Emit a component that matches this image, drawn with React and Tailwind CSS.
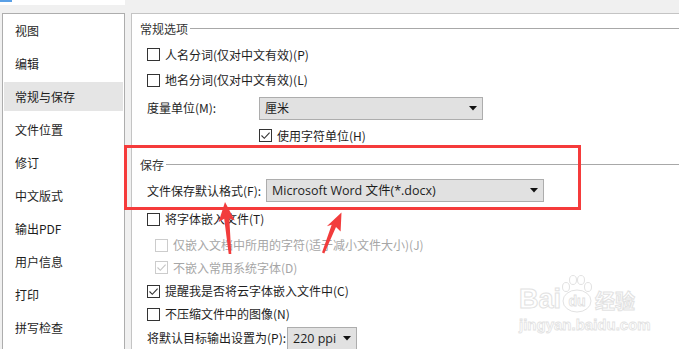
import React from "react";

function Box({ checked, disabled }) {
  return (
    <span
      className={`w-[13px] h-[13px] border ${disabled ? "border-[#cccccc]" : "border-[#333333]"} bg-white flex items-center justify-center shrink-0`}
    >
      {checked && (
        <svg width="11" height="11" viewBox="0 0 11 11">
          <path d="M1.5 5.5 L4.3 8.3 L9.6 2.6" fill="none" stroke={disabled ? "#c4c4c4" : "#333333"} strokeWidth="1.1" />
        </svg>
      )}
    </span>
  );
}

function CheckRow({ label, checked, disabled, className }) {
  return (
    <div className={`flex items-center h-[22px] ${className}`}>
      <Box checked={checked} disabled={disabled} />
      <span className={`ml-[5px] ${disabled ? "text-[#a6a6a6]" : "text-[#1e1e1e]"}`}>{label}</span>
    </div>
  );
}

function Arrow() {
  return (
    <svg width="8" height="5" viewBox="0 0 8 5" className="shrink-0">
      <polygon points="0,0 8,0 4,4.5" fill="#111" />
    </svg>
  );
}

function Select({ text, className, latin }) {
  return (
    <div className={`h-[23px] border border-[#adadad] bg-[#e1e1e1] flex items-center justify-between pl-[5px] pr-[5px] ${className}`}>
      <span className={`text-[#1e1e1e] ${latin ? "font-['Open_Sans','Noto_Sans_CJK_SC',sans-serif] text-[12.5px]" : ""}`}>{text}</span>
      <Arrow />
    </div>
  );
}

function Heading({ text, className }) {
  return (
    <div className={`flex items-center h-[22px] ${className}`}>
      <span className="text-[#333333]">{text}</span>
      <div className="flex-1 h-px bg-[#a8a8a8] ml-[2px]" />
    </div>
  );
}

const navItems = ["视图", "编辑", "常规与保存", "文件位置", "修订", "中文版式", "输出PDF", "用户信息", "打印", "拼写检查"];

export default function App() {
  return (
    <div className="w-[679px] h-[349px] overflow-hidden bg-[#f0f0f0] relative font-['Noto_Sans_CJK_SC','Microsoft_YaHei',sans-serif] text-[12px] leading-[16px]">
      <div className="h-[13px]">
        <div className="h-[5px] w-[125px] bg-white">
          <div className="h-[2px] w-[12px] bg-[#5aa0e6]" />
        </div>
      </div>
      <div className="flex h-[336px]">
        <div className="ml-[2px] w-[123px] h-full bg-white border-t border-l border-r border-[#adadad] pt-[2px] px-px flex flex-col gap-[4px]">
          {navItems.map((t, i) => (
            <div
              key={t}
              className={`h-[29px] flex items-center pl-[11px] text-[#1e1e1e] ${i === 2 ? "bg-[#e5e5e5]" : ""}`}
            >
              {t}
            </div>
          ))}
        </div>
        <div className="ml-[6px] flex-1 h-full bg-white border-t border-l border-[#c4c4c4] pt-[4px] pl-[8px] flex flex-col">
          <Heading text="常规选项" />
          <CheckRow className="mt-[4px] ml-[7px]" label="人名分词(仅对中文有效)(P)" />
          <CheckRow className="mt-[4px] ml-[7px]" label="地名分词(仅对中文有效)(L)" />
          <div className="mt-[6px] ml-[7px] h-[22px] flex items-center">
            <span className="w-[112px] text-[#1e1e1e]">度量单位(M):</span>
            <Select text="厘米" className="w-[224px]" />
          </div>
          <CheckRow className="mt-[6px] ml-[119px]" label="使用字符单位(H)" checked />
          <Heading text="保存" className="mt-[7px]" />
          <div className="mt-[4px] ml-[7px] h-[22px] flex items-center">
            <span className="w-[119px] text-[#1e1e1e]">文件保存默认格式(F):</span>
            <Select text="Microsoft Word 文件(*.docx)" className="w-[278px]" latin />
          </div>
          <CheckRow className="mt-[7px] ml-[7px]" label="将字体嵌入文件(T)" />
          <CheckRow className="mt-[4px] ml-[15px]" label="仅嵌入文档中所用的字符(适于减小文件大小)(J)" disabled />
          <CheckRow className="mt-[1px] ml-[15px]" label="不嵌入常用系统字体(D)" disabled checked />
          <CheckRow className="mt-[2px] ml-[7px]" label="提醒我是否将云字体嵌入文件中(C)" checked />
          <CheckRow className="mt-[1px] ml-[7px]" label="不压缩文件中的图像(N)" />
          <div className="mt-[2px] ml-[7px] h-[22px] flex items-center">
            <span className="w-[140px] text-[#1e1e1e]">将默认目标输出设置为(P):</span>
            <Select text="220 ppi" className="w-[70px] mt-[1px]" latin />
          </div>
        </div>
      </div>

      {/* red highlight box */}
      <div className="absolute left-[124px] top-[145px] w-[457px] h-[65px] border-[3px] border-[#f53b3b]" />

      {/* arrows */}
      <svg className="absolute left-0 top-0" width="679" height="349" viewBox="0 0 679 349">
        <polygon
          points="225,202 234.8,220.5 229.3,218.5 231.3,254 228.7,254 224.2,218.8 218.6,222"
          fill="#f23c3c"
        />
        <polygon
          points="341.5,212.5 340.6,231.5 336,227 324.3,253.5 322,252.5 331.7,224.8 326.8,226.2"
          fill="#f23c3c"
        />
      </svg>

      {/* watermark */}
      <div className="absolute left-[519px] top-[275px] flex flex-col items-start">
        <div className="flex items-end">
          <span className="font-['Liberation_Sans',sans-serif] font-bold text-[27px] leading-[28px] text-white [-webkit-text-stroke:1px_#e2e2e2]">Bai</span>
          <svg width="34" height="38" viewBox="0 0 34 38" className="-ml-[1px]">
            <ellipse cx="6" cy="12" rx="3.5" ry="4.5" fill="white" stroke="#e2e2e2" />
            <ellipse cx="13" cy="5" rx="3.5" ry="4.5" fill="white" stroke="#e2e2e2" />
            <ellipse cx="21" cy="5" rx="3.5" ry="4.5" fill="white" stroke="#e2e2e2" />
            <ellipse cx="28" cy="12" rx="3.5" ry="4.5" fill="white" stroke="#e2e2e2" />
            <ellipse cx="17" cy="26" rx="14" ry="11" fill="white" stroke="#e2e2e2" />
            <text x="17" y="31" textAnchor="middle" fontFamily="Liberation Sans" fontWeight="bold" fontSize="14" fill="white" stroke="#e0e0e0" strokeWidth="0.8">du</text>
          </svg>
          <span className="font-['Noto_Sans_CJK_SC',sans-serif] font-bold text-[20px] leading-[24px] text-white [-webkit-text-stroke:1px_#e2e2e2] ml-[1px]">经验</span>
        </div>
        <span className="font-['Liberation_Sans',sans-serif] font-bold text-[15px] leading-[16px] mt-[4px] text-white [-webkit-text-stroke:0.8px_#e2e2e2]">jingyan.baidu.com</span>
      </div>
    </div>
  );
}
